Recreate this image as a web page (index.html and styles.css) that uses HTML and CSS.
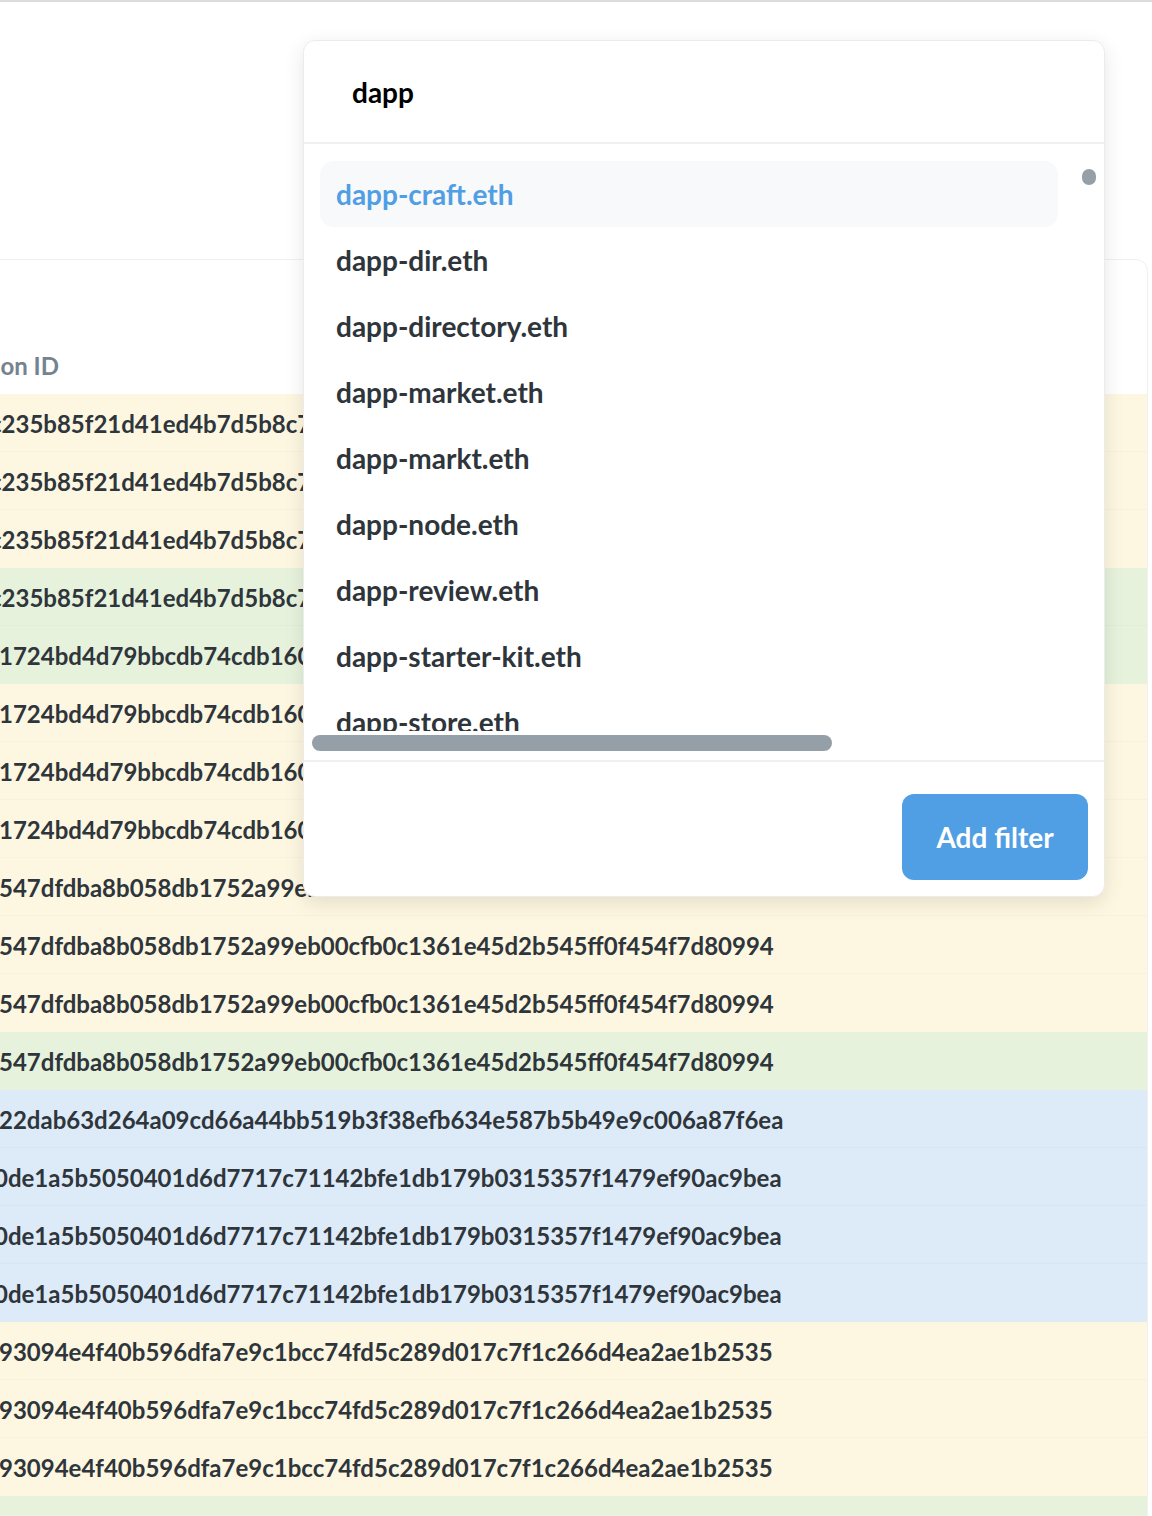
FILE: index.html
```html
<!DOCTYPE html>
<html>
<head>
<meta charset="utf-8">
<link rel="stylesheet" href="styles.css">
</head>
<body>
<div class="topline"></div>
<div class="page">
  <div class="card">
    <div class="card-head">
      <div class="th"><span>Transaction ID</span></div>
    </div>
    <div class="rows">
      <div class="row y"><span class="cell shift-c">c235b85f21d41ed4b7d5b8c7e9a1d4c02f3e6b8a9d1c4e7f0a2b5c8d9e3f61a</span></div>
      <div class="row y"><span class="cell shift-c">c235b85f21d41ed4b7d5b8c7e9a1d4c02f3e6b8a9d1c4e7f0a2b5c8d9e3f61a</span></div>
      <div class="row y last"><span class="cell shift-c">c235b85f21d41ed4b7d5b8c7e9a1d4c02f3e6b8a9d1c4e7f0a2b5c8d9e3f61a</span></div>
      <div class="row g"><span class="cell shift-c">c235b85f21d41ed4b7d5b8c7e9a1d4c02f3e6b8a9d1c4e7f0a2b5c8d9e3f61a</span></div>
      <div class="row g last"><span class="cell">1724bd4d79bbcdb74cdb160a3e9f2c5d8b1e4a7f0c3d6e9b2a5f8c1d4e7b0a3</span></div>
      <div class="row y"><span class="cell">1724bd4d79bbcdb74cdb160a3e9f2c5d8b1e4a7f0c3d6e9b2a5f8c1d4e7b0a3</span></div>
      <div class="row y"><span class="cell">1724bd4d79bbcdb74cdb160a3e9f2c5d8b1e4a7f0c3d6e9b2a5f8c1d4e7b0a3</span></div>
      <div class="row y"><span class="cell">1724bd4d79bbcdb74cdb160a3e9f2c5d8b1e4a7f0c3d6e9b2a5f8c1d4e7b0a3</span></div>
      <div class="row y"><span class="cell">547dfdba8b058db1752a99eb00cfb0c1361e45d2b545ff0f454f7d80994</span></div>
      <div class="row y"><span class="cell">547dfdba8b058db1752a99eb00cfb0c1361e45d2b545ff0f454f7d80994</span></div>
      <div class="row y last"><span class="cell">547dfdba8b058db1752a99eb00cfb0c1361e45d2b545ff0f454f7d80994</span></div>
      <div class="row g last"><span class="cell">547dfdba8b058db1752a99eb00cfb0c1361e45d2b545ff0f454f7d80994</span></div>
      <div class="row b"><span class="cell">22dab63d264a09cd66a44bb519b3f38efb634e587b5b49e9c006a87f6ea</span></div>
      <div class="row b"><span class="cell shift-0">0de1a5b5050401d6d7717c71142bfe1db179b0315357f1479ef90ac9bea</span></div>
      <div class="row b"><span class="cell shift-0">0de1a5b5050401d6d7717c71142bfe1db179b0315357f1479ef90ac9bea</span></div>
      <div class="row b last"><span class="cell shift-0">0de1a5b5050401d6d7717c71142bfe1db179b0315357f1479ef90ac9bea</span></div>
      <div class="row y"><span class="cell">93094e4f40b596dfa7e9c1bcc74fd5c289d017c7f1c266d4ea2ae1b2535</span></div>
      <div class="row y"><span class="cell">93094e4f40b596dfa7e9c1bcc74fd5c289d017c7f1c266d4ea2ae1b2535</span></div>
      <div class="row y last"><span class="cell">93094e4f40b596dfa7e9c1bcc74fd5c289d017c7f1c266d4ea2ae1b2535</span></div>
      <div class="row g"></div>
    </div>
  </div>
</div>

<div class="popover">
  <div class="search">dapp</div>
  <div class="list-area">
    <div class="viewport">
      <div class="item active">dapp-craft.eth</div>
      <div class="item">dapp-dir.eth</div>
      <div class="item">dapp-directory.eth</div>
      <div class="item">dapp-market.eth</div>
      <div class="item">dapp-markt.eth</div>
      <div class="item">dapp-node.eth</div>
      <div class="item">dapp-review.eth</div>
      <div class="item">dapp-starter-kit.eth</div>
      <div class="item">dapp-store.eth</div>
      <div class="item">dapp-tools.eth</div>
    </div>
    <div class="vthumb"></div>
    <div class="hscroll"><div class="hthumb"></div></div>
  </div>
  <div class="footer">
    <button class="btn">Add filter</button>
  </div>
</div>
</body>
</html>
```

FILE: styles.css
```css
* { box-sizing: border-box; }
html, body {
  margin: 0;
  padding: 0;
  background: #ffffff;
  font-family: Lato, "Noto Sans", "Liberation Sans", sans-serif;
  overflow: hidden;
}
body {
  width: 1152px;
  height: 1516px;
  position: relative;
}
.topline {
  height: 2px;
  background: #dcdcdc;
}
.page {
  padding-top: 257px;
}
.card {
  margin-left: -20px;
  width: 1168px;
  border: 1px solid #f0f0f0;
  border-radius: 12px;
  overflow: hidden;
}
.card-head {
  height: 134px;
  display: flex;
  align-items: flex-end;
}
.th {
  width: 78px;
  height: 58px;
  display: flex;
  justify-content: flex-end;
  align-items: center;
  overflow: hidden;
  white-space: nowrap;
  font-size: 24px;
  font-weight: 700;
  color: #74838f;
}
.th span { flex: none; }
.rows { display: flex; flex-direction: column; }
.row {
  height: 58px;
  display: flex;
  align-items: center;
  padding-left: 18px;
  padding-top: 1px;
  overflow: hidden;
  white-space: nowrap;
  border-bottom: 1px solid rgba(150, 120, 40, 0.035);
}
.row.last { border-bottom-color: transparent; }
.row.y { background: #fdf6e0; }
.row.g { background: #e6f2dc; }
.row.b { background: #ddeaf7; }
.cell {
  font-size: 24px;
  font-weight: 700;
  color: #2e353b;
  display: block;
}
.shift-c { margin-left: -9px; }
.shift-0 { margin-left: -5px; }

.popover {
  position: absolute;
  left: 303px;
  top: 40px;
  width: 802px;
  height: 857px;
  background: #ffffff;
  border: 1px solid #ececec;
  border-radius: 12px;
  box-shadow: 0 6px 20px rgba(0, 0, 0, 0.10);
  display: flex;
  flex-direction: column;
  overflow: hidden;
}
.search {
  height: 103px;
  flex: none;
  display: flex;
  align-items: center;
  padding-left: 48px;
  font-size: 28px;
  font-weight: 700;
  color: #000000;
  border-bottom: 2px solid #f0f0f0;
}
.list-area {
  position: relative;
  flex: none;
  height: 616px;
  display: flex;
  flex-direction: column;
}
.viewport {
  height: 587px;
  overflow: hidden;
  padding: 17px 46px 0 16px;
}
.item {
  height: 66px;
  display: flex;
  align-items: center;
  padding-left: 16px;
  border-radius: 14px;
  font-size: 28px;
  font-weight: 700;
  color: #2e353b;
  white-space: nowrap;
}
.item.active {
  background: #f8f9fa;
  color: #509ee3;
}
.vthumb {
  position: absolute;
  left: 778px;
  top: 25px;
  width: 14px;
  height: 16px;
  border-radius: 7px;
  background: #949fa8;
}
.hscroll {
  flex: none;
  height: 29px;
  padding: 4px 0 0 8px;
}
.hthumb {
  width: 520px;
  height: 16px;
  border-radius: 8px;
  background: #949fa8;
}
.footer {
  flex: 1;
  border-top: 2px solid #f0f0f0;
  display: flex;
  justify-content: flex-end;
  align-items: flex-start;
  padding: 32px 16px 0 0;
}
.btn {
  width: 186px;
  height: 86px;
  border: none;
  border-radius: 12px;
  background: #509ee3;
  color: #ffffff;
  font-family: Lato, "Noto Sans", sans-serif;
  font-size: 28px;
  font-weight: 700;
  padding: 0;
}
```
